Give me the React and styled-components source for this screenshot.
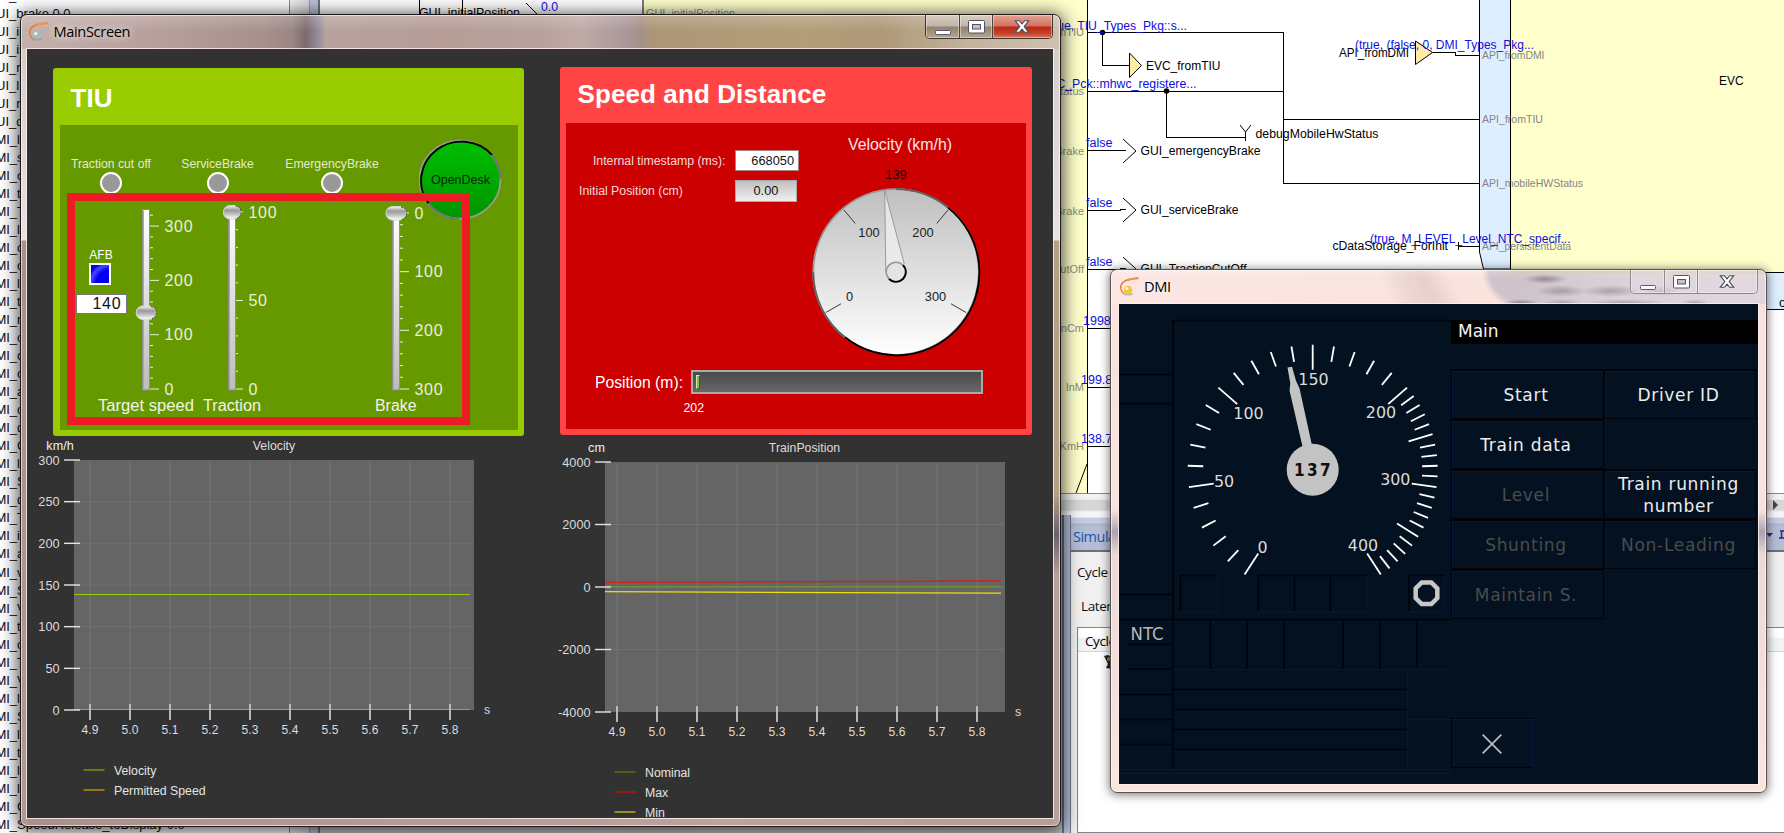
import React from 'react';
import styled, { createGlobalStyle } from 'styled-components';

const SANS = '"Liberation Sans", Arial, sans-serif';
const UI = '"Open Sans", "Noto Sans", sans-serif';
const DEJA = '"DejaVu Sans", Verdana, sans-serif';
const DEJA_NARROW = '"DejaVu Sans Condensed", "DejaVu Sans", sans-serif';

const GlobalStyle = createGlobalStyle`
  *, *::before, *::after { box-sizing: border-box; }
  html, body { margin: 0; padding: 0; overflow: hidden; background: #fff; }
  svg { display: block; flex: none; }
`;

/* ---------- shared ---------- */

const Label = ({ x, y, w, size = 12, fill = '#000', anchor = 'start', font = SANS, weight = 400, spacing, children }) => (
  <text x={x} y={y} fontSize={size} fill={fill} textAnchor={anchor} fontFamily={font} fontWeight={weight}
    letterSpacing={spacing} textLength={w} lengthAdjust={w ? 'spacingAndGlyphs' : undefined}>
    {children}
  </text>
);

const Desktop = styled.div`
  position: relative;
  width: 1784px;
  height: 833px;
  overflow: hidden;
  background: #fff;
  font-family: ${SANS};
`;

/* ---------- IDE behind the windows ---------- */

const Ide = styled.div`
  display: flex;
  width: 1784px;
  height: 833px;
`;

const TreeList = styled.div`
  display: flex;
  flex-direction: column;
  flex: none;
  width: 289px;
  height: 833px;
  overflow: hidden;
  background: #fff;
`;

const TreeRow = styled.div`
  flex: none;
  height: 18.03px;
  line-height: 18px;
  font-size: 13px;
  white-space: nowrap;
  text-indent: -14px;
  color: #0c0c14;
`;

const TreeOffset = styled.div`
  margin-top: -13px;
`;

const TreeScroll = styled.div`
  flex: none;
  width: 20px;
  border-left: 1px solid #8c8c8c;
  background: linear-gradient(90deg, #f2f2f2, #d6d6d8);
`;

const Splitter = styled.div`
  flex: none;
  width: 11px;
  border-left: 1px solid #9a9aa2;
  border-right: 2px solid #6c7080;
  background: #b9c2d8;
`;

const Work = styled.div`
  display: flex;
  flex-direction: column;
  flex: none;
  width: 1464px;
`;

const ScrollTrack = styled.div`
  display: flex;
  justify-content: flex-end;
  align-items: center;
  flex: none;
  height: 22px;
  padding-right: 4px;
  border-top: 1px solid #8a8a8a;
  background: linear-gradient(#f2f2f2 0 25%, #d6d6d8 30% 75%, #f4f4f4 85%);
`;

const Dock = styled.div`
  display: flex;
  flex: 1;
  background: #b4bdd6;
`;

const DockLeft = styled.div`
  width: 744px;
  margin-right: 6px;
  background: #c0c0c0;
  border-right: 2px solid #686c78;
`;

const SimPanel = styled.div`
  display: flex;
  flex-direction: column;
  flex: 1;
  border-left: 1px solid #70758a;
`;

const SimHeader = styled.div`
  display: flex;
  align-items: center;
  justify-content: space-between;
  height: 37px;
  padding: 7px 0 0 2px;
  background: linear-gradient(#f4f6fa 0 2px, #c3cce0 3px 8px, #adb5cc 9px, #b4bdd6 12px);
  border-bottom: 2px solid #707078;
  font: 14.5px ${UI};
  letter-spacing: -0.5px;
  color: #1c55b0;
`;

const SimBody = styled.div`
  flex: 1;
  display: flex;
  flex-direction: column;
  background: #f0f0f0;
  padding-left: 6px;
`;

const SimLine = styled.div`
  height: ${(p) => p.$h}px;
  padding: ${(p) => p.$top}px 0 0 ${(p) => p.$left || 0}px;
  font: 13.5px/18px ${UI};
  letter-spacing: -0.4px;
  color: #111;
`;

const SimTable = styled.div`
  flex: 1;
  border: 1px solid #83868c;
  border-right: 0;
  background: #fff;
`;

const SimTableHead = styled.div`
  height: 24px;
  padding: 3px 0 0 7px;
  font: 13.5px/20px ${UI};
  letter-spacing: -0.4px;
  border-bottom: 1px solid #d5d5d5;
  background: linear-gradient(#fff 40%, #f2f3f6 45%);
`;

const treeRows = [
  'GUI_traction Tools', 'GUI_brake 0.0', 'GUI_initialPosition', 'GUI_isDeskOpen', 'GUI_release', 'GUI_light', 'GUI_reset', 'GUI_direction',
  'DMI_level', 'DMI_speed', 'DMI_curve', 'DMI_train', 'DMI_Track', 'DMI_level', 'DMI_order', 'DMI_cab', 'DMI_length', 'DMI_text', 'DMI_mode',
  'DMI_odo', 'DMI_class', 'DMI_order', 'DMI_ack', 'DMI_class', 'DMI_data', 'DMI_Cabin', 'DMI_lamp', 'DMI_Symbol', 'DMI_quit', 'DMI_Target',
  'DMI_ident', 'DMI_area', 'DMI_value', 'DMI_Sound', 'DMI_Voltage', 'DMI_track', 'DMI_cycle', 'DMI_Train', 'DMI_Version', 'DMI_level',
  'DMI_System', 'DMI_list', 'DMI_text', 'DMI_lower', 'DMI_line', 'DMI_Code', 'DMI_SpeedRelease_toDisplay 0.0',
];

const BLUE = '#0f0fe0';
const PORT = '#8b8b78';

const Diagram = () => (
  <svg width="1464" height="493" viewBox="320 0 1464 493">
    <rect x="320" y="0" width="1464" height="493" fill="#fff" />
    <rect x="643" y="-2" width="444.5" height="496" fill="#ffffcc" stroke="#000" />
    <path d="M1479.5 -1V252l4 17h27V-1z" fill="#ddeeff" stroke="#000" />
    <rect x="1510.5" y="-1" width="280" height="273.500" fill="#ffffcc" stroke="#000" />
    <rect x="1760" y="273" width="24" height="36" fill="#ddeeff" />
    <g fill="none" stroke="#000" shapeRendering="crispEdges">
      <path d="M419.500 0V14M462.500 0V14M1088 32.500H1283.500V183.500H1479M1088 91.500H1283M1283 119.500H1479" />
      <path d="M1102.500 32V65.500H1129M1166.500 91V137.500H1245.500M1245.500 132V141" />
      <path d="M1088 150.500H1126M1088 210.500H1121M1120 209.500H1126M1088 269.500H1121M1120 268.500H1126M1088 328.500H1112M1088 387.500H1112M1088 446.500H1112" />
      <path d="M1433 52.500H1455.500V55.500H1479M1458.500 242V250M1458 246.500H1479M1760 309.500H1784" />
    </g>
    <g fill="none" stroke="#000">
      <path d="M526 3L537 14M1240 125l5.500 7l5.500-7M1123 139l13 12l-13 12M1123 198l13 12l-13 12M1123 257l13 12l-13 12M1087 464L1076 493" />
      <path d="M1129.500 53v24.500l12-12zM1415.500 41v23.500l17-12z" fill="#ffeba6" />
    </g>
    <circle cx="1102.500" cy="32.500" r="2.800" />
    <circle cx="1166.500" cy="91" r="2.800" />
    <Label x={419} y={17} w={101} size={13}>GUI_initialPosition</Label>
    <Label x={541} y={11} w={17} size={12.5} fill={BLUE}>0.0</Label>
    <Label x={646} y={17} w={89} size={11} fill={PORT}>GUI_initialPosition</Label>
    <Label x={1084} y={36} size={11} fill={PORT} anchor="end">API_fromTIU</Label>
    <Label x={1084} y={95} size={11} fill={PORT} anchor="end">HWStatus</Label>
    <Label x={1084} y={154.500} size={11} fill={PORT} anchor="end">emergencyBrake</Label>
    <Label x={1084} y={214.500} size={11} fill={PORT} anchor="end">serviceBrake</Label>
    <Label x={1084} y={273} size={11} fill={PORT} anchor="end">CutOff</Label>
    <Label x={1084} y={332} size={11} fill={PORT} anchor="end">InCm</Label>
    <Label x={1084} y={391} size={11} fill={PORT} anchor="end">InM</Label>
    <Label x={1084} y={450} size={11} fill={PORT} anchor="end">InKmH</Label>
    <Label x={1187} y={29.500} size={12.2} fill={BLUE} anchor="end">(true, TIU_Types_Pkg::s...</Label>
    <Label x={1196.500} y={88} size={12.3} fill={BLUE} anchor="end">EVC_Pck::mhwc_registere...</Label>
    {[146.500, 206.500, 265.500].map((y) => <Label key={y} x={1086} y={y} w={26.500} size={12.5} fill={BLUE}>false</Label>)}
    <Label x={1083} y={325} size={12.5} fill={BLUE}>1998</Label>
    <Label x={1081} y={384} size={12.5} fill={BLUE}>199.8</Label>
    <Label x={1081} y={443} size={12.5} fill={BLUE}>138.7</Label>
    <Label x={1146} y={70} w={74.500} size={12.5}>EVC_fromTIU</Label>
    <Label x={1255.500} y={138} w={123} size={12.5}>debugMobileHwStatus</Label>
    <Label x={1140.500} y={155} w={120} size={12.5}>GUI_emergencyBrake</Label>
    <Label x={1140.500} y={214} w={98} size={12.5}>GUI_serviceBrake</Label>
    <Label x={1140.500} y={272.500} w={106} size={12.5}>GUI_TractionCutOff</Label>
    <Label x={1339} y={57} w={70} size={12.5}>API_fromDMI</Label>
    <Label x={1355} y={49} w={179} size={12.5} fill={BLUE}>(true, (false, 0, DMI_Types_Pkg...</Label>
    <Label x={1332.500} y={250} w={115.500} size={12.5}>cDataStorage_ForInit</Label>
    <Label x={1482} y={59} w={62.500} size={10.5} fill="#858585">API_fromDMI</Label>
    <Label x={1482} y={123} w={61} size={10.5} fill="#858585">API_fromTIU</Label>
    <Label x={1482} y={187} w={101} size={10.5} fill="#858585">API_mobileHWStatus</Label>
    <Label x={1482} y={250} w={89} size={10.5} fill="#858585">API_persistentData</Label>
    <Label x={1370} y={243} w={200.500} size={12.5} fill={BLUE}>(true, M_LEVEL_Level_NTC_specif...</Label>
    <Label x={1719} y={85} w={24.500} size={12.5}>EVC</Label>
    <Label x={1779} y={307} size={12.5}>o</Label>
  </svg>
);

/* ---------- window chrome ---------- */

const Frame = styled.section`
  position: absolute;
  left: ${(p) => p.$x}px;
  top: ${(p) => p.$y}px;
  width: ${(p) => p.$w}px;
  height: ${(p) => p.$h}px;
  border: 1px solid ${(p) => (p.$active ? '#1c1a1a' : '#5b5353')};
  border-radius: 7px;
  overflow: hidden;
  display: flex;
  flex-direction: column;
  padding: 0 ${(p) => (p.$active ? 7 : 8)}px 8px ${(p) => (p.$active ? 6 : 8)}px;
  background: ${(p) => p.$glass};
  box-shadow: inset 0 0 0 1px rgba(255, 255, 255, 0.6), 0 ${(p) => (p.$active ? '2px 18px 2px rgba(0,0,0,.72)' : '1px 10px 1px rgba(0,0,0,.5)')};
`;

const TitleBar = styled.header`
  display: flex;
  align-items: flex-start;
  flex: none;
  height: 34px;
  padding-left: ${(p) => p.$pad}px;
`;

const TitleText = styled.h1`
  flex: 1;
  margin: 6px 0 0 ${(p) => p.$gap}px;
  font: 400 14.6px/20px ${UI};
  letter-spacing: -0.35px;
  color: #000;
  text-shadow: 0 0 8px rgba(255,255,255,.8), 0 0 8px rgba(255,255,255,.6);
`;

const IconSlot = styled.div`
  padding-top: 7px;
`;

const Client = styled.div`
  flex: 1;
  display: flex;
  flex-direction: column;
  overflow: hidden;
  background: ${(p) => p.$bg};
  outline: 1px solid rgba(255, 240, 236, 0.85);
`;

const Caption = styled.div`
  display: flex;
  height: 24px;
  width: 128px;
  border: 1px solid ${(p) => (p.$active ? '#3d3532' : '#8f878f')};
  border-top: 0;
  border-radius: 0 0 5px 5px;
  overflow: hidden;
`;

const CaptionButton = styled.div`
  display: flex;
  align-items: center;
  justify-content: center;
  width: ${(p) => p.$w}px;
  border-right: ${(p) => (p.$last ? 0 : 1)}px solid ${(p) => (p.$active ? '#4d4440' : '#8f878f')};
  box-shadow: inset 0 0 0 1px rgba(255,255,255,.4);
  background: ${(p) => (!p.$active ? 'rgba(230,222,230,.35)' : p.$last
    ? 'linear-gradient(#e2a496 0, #d2705c 48%, #b42a14 52%, #c8412a 80%, #d97a5c)'
    : 'linear-gradient(#d8cdc2 0, #c2b5a6 48%, #91816e 52%, #b6a690)')};
`;

const WinButtons = ({ active }) => (
  <Caption $active={active}>
    <CaptionButton $w={35} $active={active}>
      <svg width="18" height="20"><rect x="1.500" y="13.500" width="15" height="4" rx="1" fill="#fff" stroke="#555a6c" /></svg>
    </CaptionButton>
    <CaptionButton $w={33} $active={active}>
      <svg width="19" height="16">
        <rect x="1.500" y="1.500" width="16" height="12.500" rx="1" fill="#fff" stroke="#4e5468" />
        <rect x="5.500" y="5.500" width="8" height="4.500" fill="#c9c2bd" stroke="#4e5468" />
      </svg>
    </CaptionButton>
    <CaptionButton $w={60} $active={active} $last>
      <svg width="16" height="15" viewBox="0 0 18 16">
        <path d="M1.500 1.500h4.500l3 3.500l3-3.500h4.500L11.500 8l5 6.500H12L9 11l-3 3.500H1.500L6.500 8z" fill="#fff" stroke="#4a4f60" strokeWidth="1.300" />
      </svg>
    </CaptionButton>
  </Caption>
);

const AppIcon = ({ ball }) => (
  <svg width="21" height="20" viewBox="0 0 21 20">
    <path d="M4.500 16.500C0 12 1 6 7 3.500C11 1.800 16 1.500 19.500 1" fill="none" stroke="#e87830" strokeWidth="1.400" />
    <path d="M8 3.300C12 1.800 15 1.800 19 1.500" stroke="#ef9250" strokeWidth="2" fill="none" />
    <ellipse cx="9" cy="17" rx="5" ry="1.500" fill="#888" opacity=".45" />
    <circle cx="9" cy="13" r="4.300" fill={ball} />
    <circle cx="7.700" cy="11.600" r="1.700" fill="#fff" opacity=".8" />
  </svg>
);

/* ---------- control desk panels ---------- */

const PanelRow = styled.div`
  display: flex;
  align-items: flex-start;
  flex: none;
  height: 387px;
  padding: 18px 0 0 26px;
`;

const Panel = styled.section`
  flex: none;
  width: ${(p) => p.$w}px;
  height: ${(p) => p.$h}px;
  margin-top: ${(p) => p.$top}px;
  margin-right: 36px;
  border-radius: 3px;
  background: ${(p) => p.$color};
  display: flex;
  flex-direction: column;
`;

const PanelTitle = styled.h2`
  flex: none;
  height: ${(p) => p.$h}px;
  margin: 0;
  padding: ${(p) => p.$top}px 0 0 17.500px;
  font: 700 26px/30px ${SANS};
  letter-spacing: 0.1px;
  color: #fff;
`;

const PanelBody = styled.div`
  flex: 1;
  margin: 0 6px 6px ${(p) => p.$inset}px;
  background: ${(p) => p.$color};
  display: flex;
  flex-direction: column;
`;

const IndicatorRow = styled.div`
  display: flex;
  height: 68px;
  flex: none;
`;

const Indicator = styled.div`
  width: ${(p) => p.$w}px;
  flex: none;
  display: flex;
  flex-direction: column;
  align-items: center;
  padding-top: 32px;
  font-size: 12.2px;
  line-height: 15px;
  white-space: nowrap;
  color: #e2ead0;
`;

const Lamp = styled.span`
  width: 22px;
  height: 22px;
  border-radius: 50%;
  border: 2px solid #fff;
  background: #999;
  flex: none;
`;

const DeskSlot = styled.div`
  padding: 14px 0 0 28px;
`;

const Highlight = styled.div`
  position: relative;
  z-index: 1;
  display: flex;
  flex: none;
  width: 403px;
  height: 232px;
  margin-left: 7px;
  border: 8px solid #ed1c24;
`;

const AfbColumn = styled.div`
  display: flex;
  flex-direction: column;
  align-items: center;
  width: 52px;
  padding-top: 47px;
  flex: none;
  font-size: 12px;
  line-height: 15px;
  color: #fff;
`;

const AfbToggle = styled.span`
  width: 22px;
  height: 22px;
  margin: 0 2px 9px 0;
  border: 2px solid #fff;
  background: radial-gradient(circle at 115% 115%, #0000f4 55%, #4a4aff 74%, #0000fa 84%);
`;

const Field = styled.output`
  display: block;
  flex: none;
  width: ${(p) => p.$w}px;
  height: ${(p) => p.$h}px;
  padding-right: ${(p) => p.$pad || 4}px;
  border: 1.5px solid ${(p) => p.$edge || '#777'};
  background: ${(p) => p.$bg || '#fff'};
  font: ${(p) => p.$size}px/${(p) => p.$h - 2}px ${SANS};
  letter-spacing: ${(p) => p.$ls || 0}px;
  text-align: ${(p) => p.$align || 'right'};
  color: #111;
`;

const SliderSvg = styled.svg`
  overflow: visible;
  margin-right: ${(p) => p.$gap}px;
`;

const Slider = ({ width, gap, x, top, bottomValue, topValue, topTick, step, labels, thumbY, thumbW, caption, captionX, captionW, minorTo, majorTo }) => {
  const yOf = (v) => 188 - ((v - bottomValue) / (topValue - bottomValue)) * (188 - topTick);
  const lo = Math.min(bottomValue, topValue);
  const hi = Math.max(bottomValue, topValue);
  const ticks = [];
  for (let v = lo; v <= hi; v += step) ticks.push(v);
  const id = `track-${caption[0]}${caption[1]}`;
  return (
    <SliderSvg $gap={gap} width={width} height="216">
      <defs>
        <linearGradient id={id} x1="0" y1="0" x2="0" y2="1"><stop offset="0" stopColor="#fff" /><stop offset="1" stopColor="#bcbcbc" /></linearGradient>
        <linearGradient id={`${id}k`} x1="0" y1="0" x2="0" y2="1"><stop offset="0" stopColor="#f4f4f4" /><stop offset=".35" stopColor="#999" /><stop offset=".6" stopColor="#bbb" /><stop offset="1" stopColor="#fff" /></linearGradient>
      </defs>
      <rect x={x + 0.5} y={top} width="7" height={189 - top} fill={`url(#${id})`} stroke="#8c8f84" />
      <path d={`M${x + 1.500} ${top + 1}V188`} stroke="#aaa" />
      {ticks.map((v) => (
        <line key={v} x1={x + 8} x2={labels.includes(v) ? majorTo : minorTo} y1={yOf(v)} y2={yOf(v)} stroke="#e9efdc" />
      ))}
      {labels.map((v) => (
        <Label key={v} x={majorTo + 5.500} y={yOf(v) + 5.800} size={16} spacing={0.7} fill="#e9efdc">{v}</Label>
      ))}
      <rect x={x + 4 - thumbW / 2} y={thumbY} width={thumbW} height="13.500" rx="6.700" ry="6.200" fill={`url(#${id}k)`} stroke="#d9d9d9" />
      <path d={`M${x + thumbW / 2 - 1} ${thumbY + 0.500}q5.500 1 5.500 6.300t-5.500 6.300`} fill="none" stroke="#444" strokeDasharray="2 1" />
      <Label x={captionX} y={210} w={captionW} size={16} fill="#f0f4e6">{caption}</Label>
    </SliderSvg>
  );
};

const DeskButton = () => (
  <svg width="83" height="82" viewBox="0 0 83 82">
    <defs><linearGradient id="desk" x1="0" y1="0" x2="0" y2="1"><stop offset="0" stopColor="#00c000" /><stop offset="1" stopColor="#009400" /></linearGradient></defs>
    <ellipse cx="41" cy="40.500" rx="40.500" ry="39.200" fill="url(#desk)" stroke="#999" strokeWidth="1.800" />
    <path d="M9.500 64.500A40.500 39.200 0 0 1 73 16" fill="none" stroke="#000" strokeWidth="1.900" />
    <path d="M73 16A40.500 39.200 0 0 1 81.500 40M9.500 64.500A40.500 39.200 0 0 0 40 79.700" fill="none" stroke="#707070" strokeWidth="1.900" />
    <Label x={12} y={45} w={59} size={12.5} fill="#002a00">OpenDesk</Label>
  </svg>
);

const SpeedTop = styled.div`
  display: flex;
  flex: none;
  height: 247px;
`;

const FormColumn = styled.div`
  width: 234px;
  flex: none;
  display: flex;
  flex-direction: column;
  gap: 9px;
  padding-top: 27px;
`;

const FormRow = styled.label`
  display: flex;
  align-items: center;
  gap: 10px;
  font-size: 12.300px;
  color: #f4dada;
`;

const FormLabel = styled.span`
  width: 159.500px;
  margin-right: -0.5px;
  padding-left: ${(p) => p.$left || 0}px;
  text-align: ${(p) => p.$align};
  white-space: nowrap;
`;

const PositionRow = styled.div`
  display: flex;
  align-items: center;
  height: 24px;
  color: #fff;
  font-size: 15.700px;
`;

const PositionLabel = styled.span`
  width: 117px;
  padding-top: 2px;
  text-align: right;
  white-space: nowrap;
`;

const PositionBar = styled.div`
  width: 292px;
  height: 24px;
  margin-left: 8px;
  padding: 3px;
  border: 2px solid #aaa;
  background: linear-gradient(#4a4a4a, #686868);
`;

const PositionFill = styled.div`
  width: 4px;
  height: 14px;
  border: 1px solid #d5e8b0;
  border-right-color: #3b5a14;
  border-bottom-color: #4d7a1c;
  background: #8db360;
`;

const PositionValue = styled.span`
  width: 138px;
  margin-top: 7px;
  text-align: right;
  font-size: 12.300px;
  line-height: 15px;
  color: #fff;
`;

const polar = (cx, cy, r, deg) => {
  const a = (deg * Math.PI) / 180;
  return [cx + r * Math.sin(a), cy - r * Math.cos(a)];
};

const Tick = ({ cx, cy, r1, r2, deg, stroke, width }) => {
  const [x1, y1] = polar(cx, cy, r1, deg);
  const [x2, y2] = polar(cx, cy, r2, deg);
  return <line x1={x1} y1={y1} x2={x2} y2={y2} stroke={stroke} strokeWidth={width} />;
};

const VelocityGauge = () => (
  <svg width="226" height="247" viewBox="800 123 226 247">
    <defs><linearGradient id="dial" x1="0" y1="0" x2="0" y2="1"><stop offset="0" stopColor="#bfbfbf" /><stop offset="1" stopColor="#fff" /></linearGradient></defs>
    <Label x={848} y={150} w={104} size={16} fill="#f8e4e4">Velocity (km/h)</Label>
    <Label x={896} y={179} size={12.800} fill="#2c0000" anchor="middle">139</Label>
    <circle cx="896" cy="272" r="82.800" fill="url(#dial)" stroke="#999" strokeWidth="1.800" />
    <path d="M896 189.200A82.800 82.800 0 0 1 948 207.600M813.200 272A82.800 82.800 0 0 0 845 337.300" fill="none" stroke="#606060" strokeWidth="1.800" />
    <path d="M948 207.600A82.800 82.800 0 1 1 845 337.300" fill="none" stroke="#000" strokeWidth="1.800" />
    {[-120, -40, 40, 120].map((d) => <Tick key={d} cx={896} cy={272} r1={63.500} r2={81} deg={d} stroke="#222" width={0.9} />)}
    <Label x={849.500} y={301} size={12.800} fill="#222" anchor="middle">0</Label>
    <Label x={869} y={237} size={12.800} fill="#222" anchor="middle">100</Label>
    <Label x={923} y={237} size={12.800} fill="#222" anchor="middle">200</Label>
    <Label x={935.500} y={301} size={12.800} fill="#222" anchor="middle">300</Label>
    <path d="M885.800 272L884.700 190L904.300 264" fill="#eee" fillOpacity=".8" stroke="#999" />
    <circle cx="896" cy="272" r="9.800" fill="#e4e4e4" stroke="#999" strokeWidth="1.600" />
    <path d="M903 265.100A9.800 9.800 0 1 1 889 278.900" fill="none" stroke="#000" strokeWidth="1.800" />
  </svg>
);

/* ---------- trend charts ---------- */

const ChartRow = styled.div`
  display: flex;
  flex: 1;
`;

const Chart = ({ ox, oy, unit, unitDx, title, titleDx, yTicks, series, legend }) => {
  const W = 400;
  const H = 250;
  const xs = ['4.9', '5.0', '5.1', '5.2', '5.3', '5.4', '5.5', '5.6', '5.7', '5.8'];
  const yAt = (i) => (H * i) / (yTicks.length - 1);
  const first = ox > 50 ? 12 : 16;
  return (
    <svg width="513" height="382">
      <g transform={`translate(${ox} ${oy})`}>
        <rect width={W} height={H} fill="#656565" />
        {xs.map((t, i) => <line key={t} x1={first + i * 40} x2={first + i * 40} y1="1" y2={H} stroke="#707070" strokeWidth="1.600" />)}
        {yTicks.slice(1, -1).map((t, i) => <line key={t} x1="0" x2={W - 1} y1={yAt(i + 1)} y2={yAt(i + 1)} stroke="#727272" />)}
        {series.map((s) => <line key={s.color} x1="0" x2="396" y1={s.y1} y2={s.y2} stroke={s.color} strokeWidth={s.w || 1.300} />)}
        {yTicks.map((t, i) => (
          <g key={t}>
            <line x1="-10" x2="6" y1={yAt(i)} y2={yAt(i)} stroke="#e4e4e4" strokeWidth="1.400" />
            <Label x={-14.500} y={yAt(i) + 4.500} size={12.700} anchor="end" fill="#dcdcdc">{t}</Label>
          </g>
        ))}
        {xs.map((t, i) => (
          <g key={t}>
            <line x1={first + i * 40} x2={first + i * 40} y1={H - 6} y2={H + 10} stroke="#c4c4c4" strokeWidth="1.800" />
            <Label x={first + i * 40} y={H + 24} w={16.800} size={12.500} anchor="middle" fill="#dcdcdc">{t}</Label>
          </g>
        ))}
        <Label x={unitDx} y={-9.800} size={12.600} anchor="middle" fill="#f0f0f0">{unit}</Label>
        <Label x={titleDx} y={-10} size={12.300} anchor="middle" fill="#dcdcdc">{title}</Label>
        <Label x={W + 13} y={H + 3.500} size={12.300} anchor="middle" fill="#dcdcdc">s</Label>
        {legend.map((l, i) => (
          <g key={l.name}>
            <line x1="9.500" x2="30.500" y1={H + 60 + i * 20} y2={H + 60 + i * 20} stroke={l.color} strokeWidth="1.700" />
            <Label x={40} y={H + 64.500 + i * 20} size={12.300} fill="#e4e4e4">{l.name}</Label>
          </g>
        ))}
      </g>
    </svg>
  );
};

/* ---------- DMI ---------- */

const Dmi = styled.div`
  display: flex;
  height: 480px;
  background: #031121;
`;

const MenuColumn = styled.div`
  width: 307px;
  flex: none;
  padding-top: 16px;
  display: flex;
  flex-direction: column;
`;

const MenuTitle = styled.div`
  flex: none;
  height: 24px;
  margin-bottom: 25px;
  padding-left: 7px;
  background: #000;
  color: #f4f4f4;
  font: 17px/23px ${DEJA};
`;

const MenuGrid = styled.div`
  display: grid;
  grid-template-columns: 153px 152px;
  grid-auto-rows: 50px;
`;

const MenuButton = styled.div`
  display: flex;
  align-items: center;
  justify-content: center;
  text-align: center;
  border: ${(p) => (p.$blank ? 0 : 1)}px solid #00040a;
  border-top-width: ${(p) => (p.$blank ? 0 : 2)}px;
  box-shadow: ${(p) => (p.$blank ? 'none' : 'inset 1px 1px 0 #06183a')};
  font: 17px/22px ${DEJA};
  letter-spacing: 0.7px;
  padding: 0.5px 3px 0 0;
  color: ${(p) => (p.$off ? '#4b4b4b' : '#ececec')};
`;

const CloseButton = styled.div`
  display: flex;
  align-items: center;
  justify-content: center;
  width: 82px;
  height: 50px;
  margin-top: 99px;
  padding-top: 1px;
  border: 1.5px solid #00040a;
  border-right-color: #06183a;
  box-shadow: inset 0 1px 0 #06183a;
`;

const menu = [
  ['Start'], ['Driver ID'],
  ['Train data'], ['', 'blank'],
  ['Level', 'off'], ['Train running number'],
  ['Shunting', 'off'], ['Non-Leading', 'off'],
  ['Maintain S.', 'off'], ['', 'blank'],
];

const DmiSpeed = () => {
  const cx = 1312.700;
  const cy = 469.700;
  const ticks = [];
  for (let v = 0; v <= 400; v += 10) ticks.push(v);
  const deg = (v) => (v <= 200 ? -147 + v * 0.98 : 49 + (v - 200) * 0.49);
  const nums = [['0', 1262.500, 547.700], ['50', 1224, 481.300], ['100', 1248.500, 413.300], ['150', 1313.500, 379], ['200', 1381, 412.300], ['300', 1395.300, 479], ['400', 1363, 545.500]];
  return (
    <svg width="332" height="480" viewBox="1119 304 332 480">
      <g fill="none" stroke="#00030a" strokeWidth="1.500">
        <path d="M1173 320V619" strokeWidth="2" />
        <path d="M1173 320.500H1451M1119 374.500H1172M1119 403.500H1172M1119 594.500H1172M1119 619.500H1451" />
        <path d="M1127 644.500H1172M1127 669H1172M1119 694.500H1172M1119 719.500H1172M1119 744.500H1172M1173 619V769" />
        <path d="M1210.500 620V669M1247 620V669M1284 620V669M1343 620V669M1380 620V669M1417 620V668" />
        <path d="M1173 689.500H1407M1173 709.500H1407M1173 729.500H1407M1173 749.500H1407" />
        <path d="M1180.500 611V575.500H1217M1258.500 611V575.500H1367M1294.500 611V575M1330.500 611V575M1409 611V575.500H1445" />
      </g>
      <g fill="none" stroke="#06183a">
        <path d="M1180 611.500H1217.500V576M1258 611.500H1367V576M1409 611.500H1445V576M1173 669.500H1451M1407.500 670V769M1407 719.500H1451M1119 769.500H1451M1119 773.500H1451" />
      </g>
      {ticks.map((v) => <Tick key={v} cx={cx} cy={cy} r1={v % 50 === 0 ? 100 : 109.500} r2={125} deg={deg(v)} stroke="#fff" width={1.800} />)}
      {nums.map(([t, x, y]) => (
        <Label key={t} x={x} y={y + 5.500} w={t.length * 10.100} size={16} anchor="middle" font={DEJA_NARROW} fill="#dcdcdc">{t}</Label>
      ))}
      <path d="M1287.500 367.500l4.500-.7l4 14l3.500 7.500L1313 450l-9 3L1289.500 390.500l.8-7z" fill="#c3c3c3" />
      <circle cx={cx} cy={cy} r="26" fill="#c3c3c3" />
      <Label x={1294} y={475.500} size={17} weight={700} font={DEJA_NARROW} fill="#101010" spacing={2.400}>137</Label>
      <path d="M1421.700 582.500h9.600l6 6v9.600l-6 6h-9.600l-6-6v-9.600z" fill="none" stroke="#c8c8c8" strokeWidth="4.500" />
      <Label x={1130.500} y={640} w={33} size={17} font={DEJA_NARROW} fill="#b8b8b8">NTC</Label>
    </svg>
  );
};

const mainGlass = `
  linear-gradient(180deg, rgba(255,255,255,.22) 0, rgba(255,255,255,0) 16px),
  linear-gradient(90deg, #c4b0ac 0, #b8a09c 130px, #a8918d 240px, #9c8785 270px, #7d6c6e 285px, #968f9c 298px, #b8a29e 305px, #b59c97 420px, #b8a29d 520px, #bfaaa6 560px, #a99598 610px, #a49088 620px, #ac9676 630px, #b39d79 780px, #ad9878 860px, #c4b49c 950px, #cfc0ae 1040px) 0 0 / 100% 34px no-repeat,
  linear-gradient(#d8ccc8 34px, #e8e2e0 225px, #b5a083 226px, #b5a083 480px, #6a6070 520px, #b8a09b 560px) 100% 0 / 8px 100% no-repeat,
  linear-gradient(#d8ccc8 34px, #e8e2e0 225px, #a8918d 226px, #b09994) 0 0 / 7px 100% no-repeat,
  linear-gradient(90deg, #a8918d, #bda29e 700px, #b89c98)`;

const dmiGlass = `
  linear-gradient(180deg, rgba(255,255,255,.25) 0, rgba(255,255,255,0) 8px),
  radial-gradient(ellipse 22px 5px at 434px 9px, rgba(90,78,90,.5), transparent) 0 0 / 100% 34px no-repeat,
  radial-gradient(ellipse 26px 6px at 450px 21px, rgba(100,88,100,.4), transparent) 0 0 / 100% 34px no-repeat,
  radial-gradient(ellipse 30px 6px at 500px 21px, rgba(100,88,100,.4), transparent) 0 0 / 100% 34px no-repeat,
  radial-gradient(ellipse 20px 5px at 550px 21px, rgba(100,88,100,.3), transparent) 0 0 / 100% 34px no-repeat,
  radial-gradient(ellipse 18px 4px at 410px 33px, rgba(80,70,80,.5), transparent) 0 0 / 100% 34px no-repeat,
  radial-gradient(ellipse 20px 4px at 452px 33px, rgba(80,70,80,.3), transparent) 0 0 / 100% 34px no-repeat,
  radial-gradient(ellipse 40px 4px at 515px 33px, rgba(80,70,80,.35), transparent) 0 0 / 100% 34px no-repeat,
  radial-gradient(ellipse 14px 4px at 584px 33px, rgba(80,70,80,.35), transparent) 0 0 / 100% 34px no-repeat,
  linear-gradient(180deg, rgba(205,185,150,.75) 0, rgba(205,185,150,0) 6px) 100% 0 / 257px 34px no-repeat,
  linear-gradient(90deg, transparent 410px, #cfc4cb 412px, #dcd3da 520px, #e0d7dc) 0 0 / 100% 34px no-repeat,
  radial-gradient(ellipse 42px 40px at 413px 0, #cfc4cb 82%, transparent) 0 0 / 100% 34px no-repeat,
  linear-gradient(65deg, #fbe6e2 0, #fae4df 255px, #edd7d3 275px, #e8d0cd 295px, #fbe4de 320px, #f8ddd6) 0 0 / 100% 34px no-repeat,
  linear-gradient(#f9e2dd, #f9e2dd 240px, #aaa2b4 262px, #eed8d6 285px, #fce4df)`;

export default function App() {
  return (
    <>
      <GlobalStyle />
      <Desktop>
        <Ide>
          <TreeList>
            <TreeOffset>
              {treeRows.map((t, i) => <TreeRow key={i}>{t}</TreeRow>)}
            </TreeOffset>
          </TreeList>
          <TreeScroll />
          <Splitter />
          <Work>
            <Diagram />
            <ScrollTrack><svg width="8" height="10"><path d="M1 0l5 5l-5 5z" fill="#444" /></svg></ScrollTrack>
            <Dock>
              <DockLeft />
              <SimPanel>
                <SimHeader>
                  Simulation
                  <svg width="18" height="14"><path d="M0 4h7l-3.500 4z" fill="#1c2e88" /><path d="M14 2h4M15.500 2v7M13 9h5" stroke="#1c2e88" strokeWidth="1.500" /></svg>
                </SimHeader>
                <SimBody>
                  <SimLine $h={38} $top={11}>Cycle</SimLine>
                  <SimLine $h={37} $top={7} $left={4}>Latency</SimLine>
                  <SimTable>
                    <SimTableHead>Cycle</SimTableHead>
                    <svg width="50" height="18"><path d="M26 4l4-1l4 2v12l-6-1l2-4z" fill="#222" /><circle cx="31" cy="7" r="2" fill="#998a20" /></svg>
                  </SimTable>
                </SimBody>
              </SimPanel>
            </Dock>
          </Work>
        </Ide>

        <Frame $x={20} $y={14} $w={1041} $h={813} $active $glass={mainGlass}>
          <TitleBar $pad={1}>
            <IconSlot><AppIcon ball="#a9b8bf" /></IconSlot>
            <TitleText $gap={4.5}>MainScreen</TitleText>
            <WinButtons active />
          </TitleBar>
          <Client $bg="#323232">
            <PanelRow>
              <Panel $w={471} $h={368} $top={1} $color="#99cc00">
                <PanelTitle $h={57} $top={15}>TIU</PanelTitle>
                <PanelBody $color="#669900" $inset={7}>
                  <IndicatorRow>
                    <Indicator $w={102}>Traction cut off<Lamp /></Indicator>
                    <Indicator $w={111}>ServiceBrake<Lamp /></Indicator>
                    <Indicator $w={118}>EmergencyBrake<Lamp /></Indicator>
                    <DeskSlot><DeskButton /></DeskSlot>
                  </IndicatorRow>
                  <Highlight>
                    <AfbColumn>
                      AFB
                      <AfbToggle />
                      <Field $w={51} $h={20} $size={16} $ls={0.8}>140</Field>
                    </AfbColumn>
                    <Slider width={75} gap={0} x={15} top={8.500} bottomValue={0} topValue={320} topTick={14.200} step={20} labels={[0, 100, 200, 300]}
                      thumbY={105} thumbW={19.500} minorTo={26} majorTo={32} caption="Target speed" captionX={-29} captionW={96} />
                    <Slider width={90} gap={78} x={26} top={8.500} bottomValue={0} topValue={100} topTick={11} step={10} labels={[0, 50, 100]}
                      thumbY={4.500} thumbW={17} minorTo={36} majorTo={41} caption="Traction" captionX={1} captionW={58} />
                    <Slider width={80} gap={0} x={22} top={8.500} bottomValue={300} topValue={0} topTick={12} step={20} labels={[0, 100, 200, 300]}
                      thumbY={5.500} thumbW={20} minorTo={33} majorTo={39} caption="Brake" captionX={5} captionW={41.500} />
                  </Highlight>
                </PanelBody>
              </Panel>

              <Panel $w={472} $h={368} $top={0} $color="#ff4545">
                <PanelTitle $h={56} $top={12}>Speed and Distance</PanelTitle>
                <PanelBody $color="#cc0000" $inset={6}>
                  <SpeedTop>
                    <FormColumn>
                      <FormRow>
                        <FormLabel $align="right">Internal timestamp (ms):</FormLabel>
                        <Field $w={64} $h={21} $size={12.800} $edge="#b08080">668050</Field>
                      </FormRow>
                      <FormRow>
                        <FormLabel $align="left" $left={13}>Initial Position (cm)</FormLabel>
                        <Field $w={62} $h={22} $size={12.800} $pad={0.1} $align="center" $edge="#aaa" $bg="linear-gradient(#c0c0c0, #f0f0f0)">0.00</Field>
                      </FormRow>
                    </FormColumn>
                    <VelocityGauge />
                  </SpeedTop>
                  <PositionRow>
                    <PositionLabel>Position (m):</PositionLabel>
                    <PositionBar><PositionFill /></PositionBar>
                  </PositionRow>
                  <PositionValue>202</PositionValue>
                </PanelBody>
              </Panel>
            </PanelRow>

            <ChartRow>
              <Chart ox={47} oy={24} unit="km/h" unitDx={-14} title="Velocity" titleDx={200}
                yTicks={['300', '250', '200', '150', '100', '50', '0']}
                series={[{ color: '#99cc00', y1: 134.500, y2: 134.500, w: 1 }, { color: '#b09a40', y1: 249.500, y2: 249.500, w: 1 }]}
                legend={[{ name: 'Velocity', color: '#6c8a10' }, { name: 'Permitted Speed', color: '#a8860f' }]} />
              <Chart ox={65} oy={26} unit="cm" unitDx={-8.500} title="TrainPosition" titleDx={199.500}
                yTicks={['4000', '2000', '0', '-2000', '-4000']}
                series={[{ color: '#738c3a', y1: 124.800, y2: 124.800, w: 1.600 }, { color: '#d81c1c', y1: 120.300, y2: 119 }, { color: '#e8e010', y1: 129.700, y2: 131.200 }]}
                legend={[{ name: 'Nominal', color: '#4e6c14' }, { name: 'Max', color: '#a81818' }, { name: 'Min', color: '#a8a418' }]} />
            </ChartRow>
          </Client>
        </Frame>

        <Frame $x={1110} $y={269} $w={657} $h={524} $glass={dmiGlass}>
          <TitleBar $pad={0}>
            <IconSlot><AppIcon ball="#f0c830" /></IconSlot>
            <TitleText $gap={4}>DMI</TitleText>
            <WinButtons />
          </TitleBar>
          <Client $bg="#031121">
            <Dmi>
              <DmiSpeed />
              <MenuColumn>
                <MenuTitle>Main</MenuTitle>
                <MenuGrid>
                  {menu.map(([t, state], i) => (
                    <MenuButton key={i} $off={state === 'off'} $blank={state === 'blank'}>{t}</MenuButton>
                  ))}
                </MenuGrid>
                <CloseButton>
                  <svg width="20" height="20"><path d="M.7.7l18.600 18.600M19.300.7L.7 19.300" stroke="#bcbcbc" strokeWidth="1.700" /></svg>
                </CloseButton>
              </MenuColumn>
            </Dmi>
          </Client>
        </Frame>
      </Desktop>
    </>
  );
}
